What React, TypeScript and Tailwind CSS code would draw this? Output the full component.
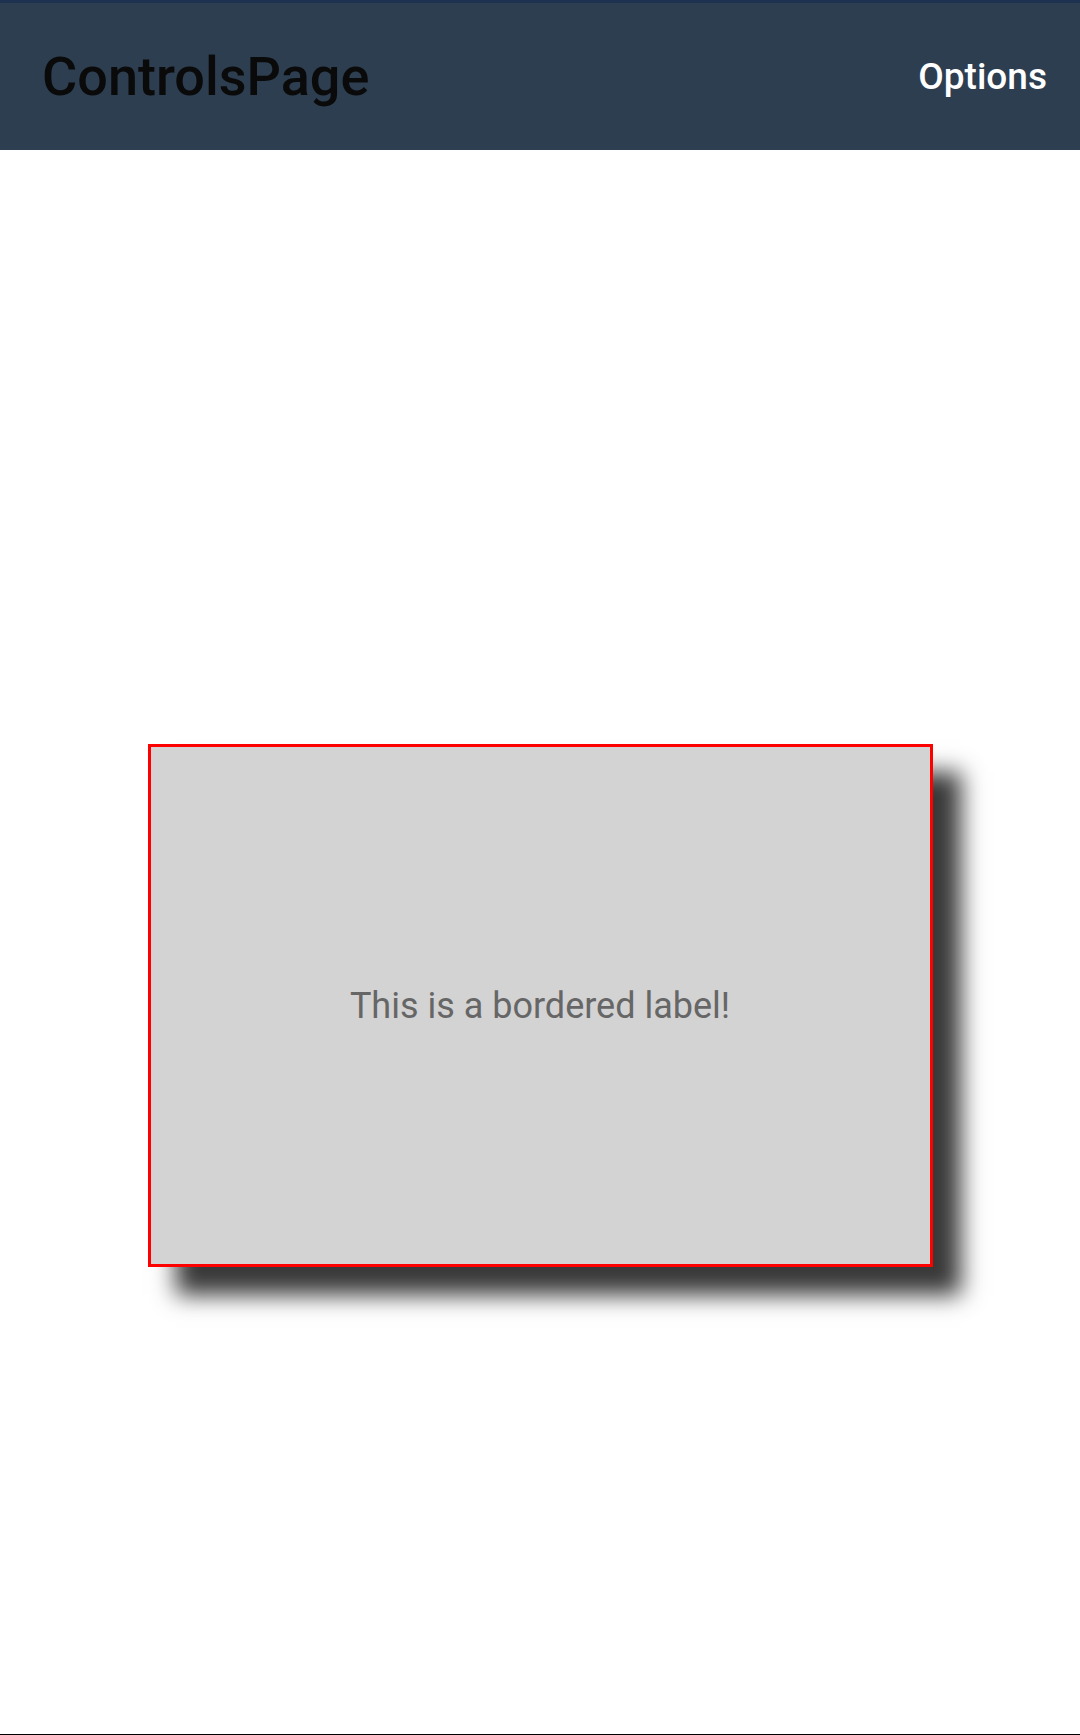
export default function App() {
  return (
    <div className="flex h-[1735px] w-full flex-col bg-white font-['Roboto',sans-serif] border-b border-black">
      <header className="flex h-[150px] shrink-0 items-center justify-between border-t-[3px] border-[#1c3250] bg-[#2d3e50] pl-[42px] pr-[33px]">
        <h1 className="text-[54px] font-medium leading-none text-[#0a0a0a]">ControlsPage</h1>
        <button className="text-[37px] font-medium leading-none text-white">Options</button>
      </header>
      <main className="flex flex-1 justify-center pt-[594px]">
        <div className="flex h-[523px] w-[785px] items-center justify-center border-[3px] border-[#ff0000] bg-[#d3d3d3] shadow-[28px_28px_22px_rgba(0,0,0,0.78)]">
          <span className="text-[36px] leading-none text-[#666666]">This is a bordered label!</span>
        </div>
      </main>
    </div>
  );
}
